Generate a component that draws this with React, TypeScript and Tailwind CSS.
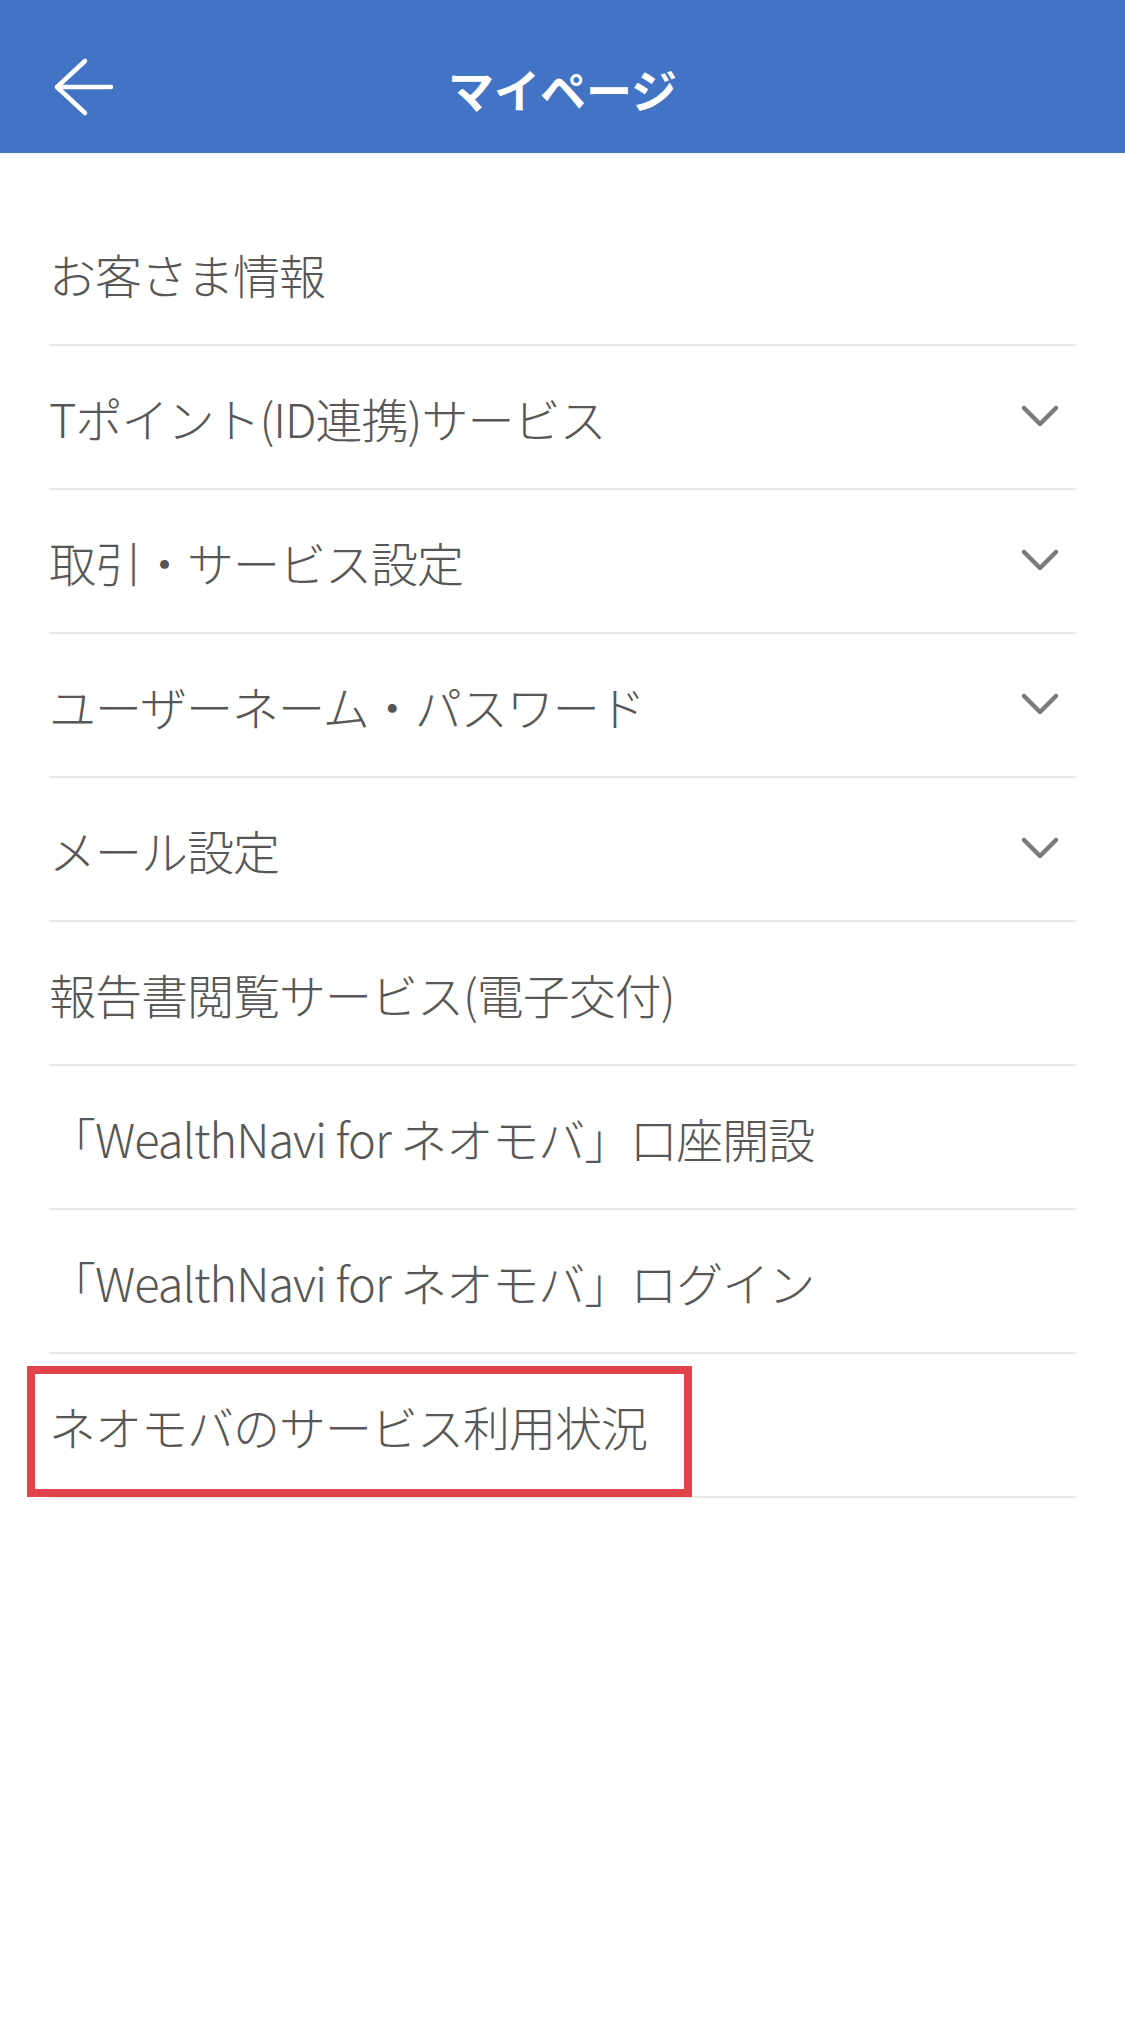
import React from "react";

const font = { fontFamily: '"Noto Sans CJK JP", "Noto Sans", sans-serif' };

type Row = { label: string; chevron?: boolean; highlight?: boolean };

const rows: Row[] = [
  { label: "お客さま情報" },
  { label: "Tポイント(ID連携)サービス", chevron: true },
  { label: "取引・サービス設定", chevron: true },
  { label: "ユーザーネーム・パスワード", chevron: true },
  { label: "メール設定", chevron: true },
  { label: "報告書閲覧サービス(電子交付)" },
  { label: "「WealthNavi for ネオモバ」口座開設" },
  { label: "「WealthNavi for ネオモバ」ログイン" },
  { label: "ネオモバのサービス利用状況", highlight: true },
];

function Chevron() {
  return (
    <svg width="40" height="26" viewBox="0 0 40 26" className="shrink-0">
      <polyline
        points="4,4 20,20 36,4"
        fill="none"
        stroke="#7a7a7a"
        strokeWidth="4.5"
        strokeLinecap="round"
        strokeLinejoin="round"
      />
    </svg>
  );
}

export default function App() {
  return (
    <div className="w-[1125px] min-h-[2019px] bg-white" style={font}>
      <header className="h-[153px] bg-[#4273c5] flex items-center pt-[22px] relative">
        <div className="absolute left-[52px] top-[56px]">
          <svg width="64" height="62" viewBox="0 0 64 62">
            <polyline
              points="33,5 5,31 33,57"
              fill="none"
              stroke="#ffffff"
              strokeWidth="4.5"
              strokeLinecap="round"
              strokeLinejoin="round"
            />
            <line x1="5" y1="31" x2="59" y2="31" stroke="#ffffff" strokeWidth="4.5" strokeLinecap="round" />
          </svg>
        </div>
        <h1 className="flex-1 text-center text-white text-[46px] font-bold leading-none">
          マイページ
        </h1>
      </header>
      <main className="pt-[49px] px-[49px]">
        {rows.map((r) => (
          <div
            key={r.label}
            className="relative h-[144px] border-b-2 border-[#e8e8e8] flex items-center justify-between pr-[16px]"
          >
            <span className="text-[47px] font-light tracking-[-1px] text-[#575757] leading-none whitespace-nowrap">
              {r.label}
            </span>
            {r.chevron && <Chevron />}
            {r.highlight && (
              <div className="absolute left-[-22px] top-[12px] w-[665px] h-[131px] border-[8px] border-[#e0434c]" />
            )}
          </div>
        ))}
      </main>
    </div>
  );
}
